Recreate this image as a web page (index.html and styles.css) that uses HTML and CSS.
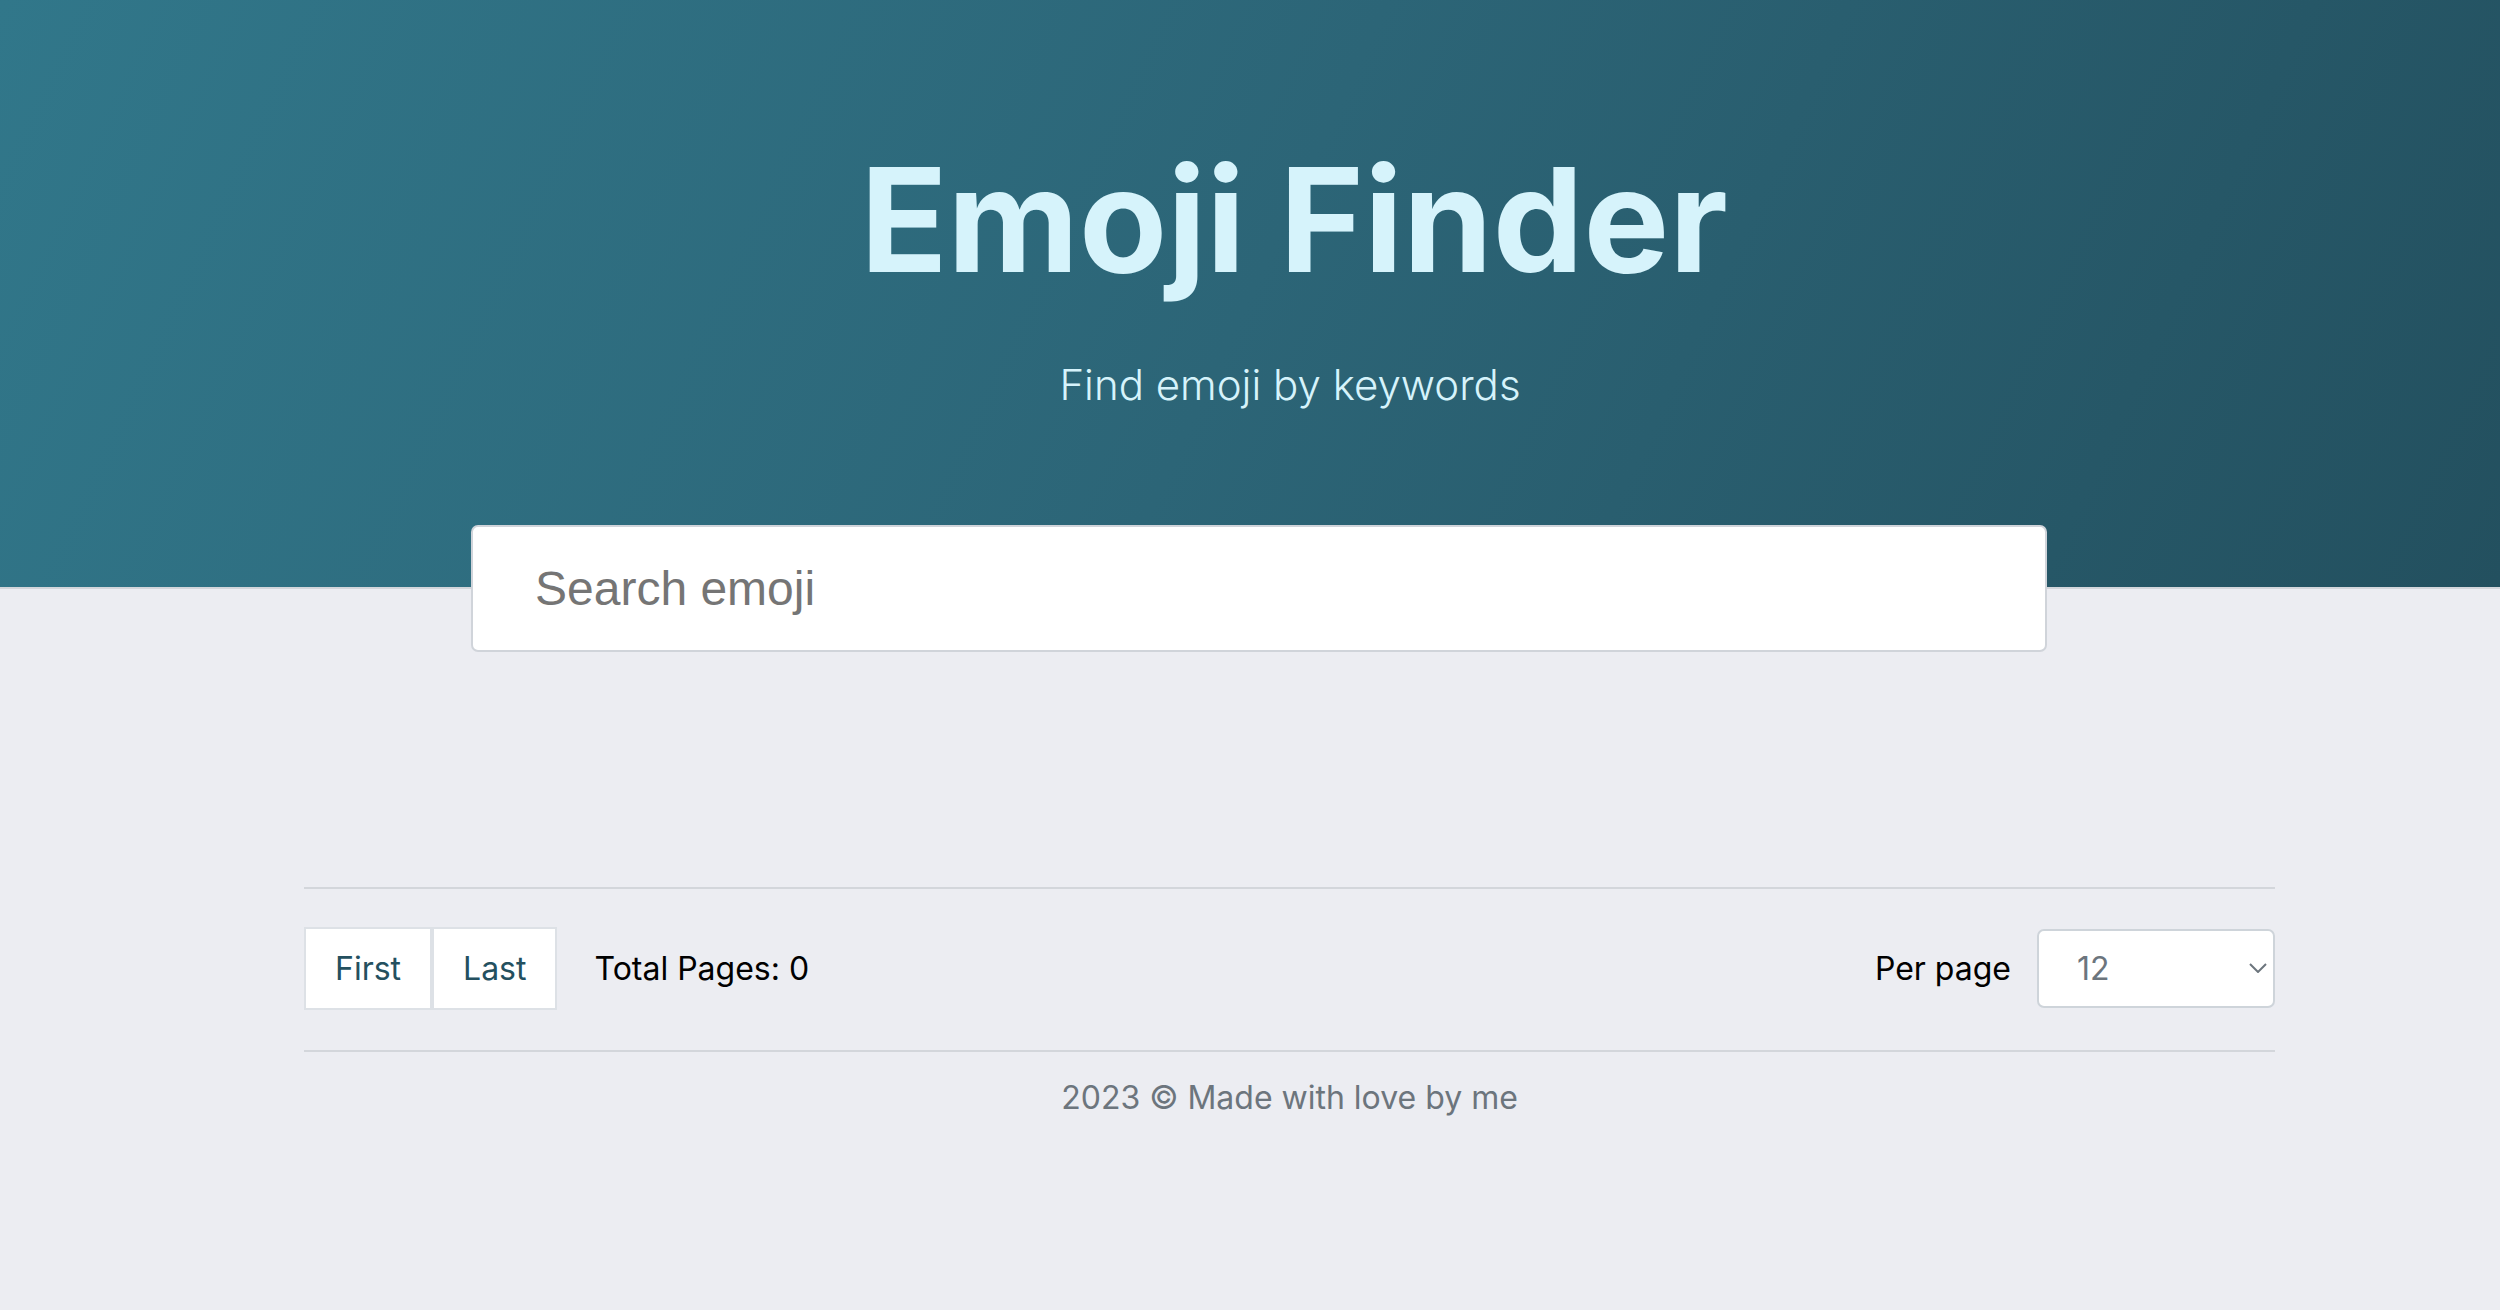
FILE: index.html
```html
<!DOCTYPE html>
<html lang="en">
<head>
<meta charset="utf-8">
<title>Emoji Finder</title>
<link rel="stylesheet" href="styles.css">
</head>
<body>
  <header class="hero">
    <div class="hero-inner">
      <h1 class="hero-title">Emoji Finder</h1>
      <p class="hero-subtitle">Find emoji by keywords</p>
    </div>
  </header>
  <div class="search-wrap">
    <input class="search-input" type="text" placeholder="Search emoji">
  </div>
  <main class="content">
    <div class="pager">
      <div class="pager-left">
        <div class="btn-group">
          <button class="pager-btn" type="button">First</button>
          <button class="pager-btn" type="button">Last</button>
        </div>
        <span class="total">Total Pages: 0</span>
      </div>
      <div class="pager-right">
        <label class="per-label" for="per">Per page</label>
        <div class="select-wrap">
          <select id="per" class="per-select">
            <option>12</option>
            <option>24</option>
            <option>48</option>
          </select>
          <svg class="chev" width="18" height="10" viewBox="0 0 18 10" aria-hidden="true"><path d="M1 1 L9 9 L17 1" fill="none" stroke="#6c757d" stroke-width="2"/></svg>
        </div>
      </div>
    </div>
    <footer class="footer">2023 © Made with love by me</footer>
  </main>
</body>
</html>
```
FILE: styles.css
```css
html, body {
  margin: 0;
  padding: 0;
}
body {
  background: #ecedf2;
  font-family: Inter, "Noto Sans", sans-serif;
  min-height: 1310px;
}
.hero {
  height: 587px;
  background: linear-gradient(115deg, #31778a 0%, #2c6577 50%, #23505f 100%);
  border-bottom: 2px solid #d3d6db;
}
.hero-inner {
  padding: 134px 0 0 80px;
  text-align: center;
}
.hero-title {
  margin: 0;
  padding-left: 8px;
  font-size: 144px;
  font-weight: 700;
  line-height: 172.8px;
  color: #d6f3fb;
}
.hero-subtitle {
  margin: 52px 0 0;
  font-size: 42px;
  font-weight: 300;
  color: #d6f3fb;
}
.search-wrap {
  margin-top: -64px;
  padding-left: 471px;
}
.search-input {
  box-sizing: border-box;
  display: block;
  width: 1576px;
  height: 127px;
  border: 2px solid #d0d4da;
  border-radius: 7px;
  background: #fff;
  padding: 0 62px;
  font-family: "Liberation Sans", Arial, sans-serif;
  font-size: 48px;
  color: #333;
  outline: none;
}
.search-input::placeholder {
  color: #757575;
}
.content {
  width: 1971px;
  margin: 235px 0 0 304px;
}
.pager {
  border-top: 2px solid #d3d6db;
  border-bottom: 2px solid #d3d6db;
  padding: 38px 0 40px;
  display: flex;
  justify-content: space-between;
  align-items: center;
}
.pager-left {
  display: flex;
  align-items: center;
  gap: 37px;
}
.btn-group {
  display: flex;
}
.pager-btn {
  box-sizing: border-box;
  height: 83px;
  padding: 0 29px;
  background: #fff;
  border: 2px solid #dde1e6;
  font-family: Inter, sans-serif;
  font-size: 32px;
  color: #24505f;
  cursor: pointer;
}
.total, .per-label {
  font-size: 32px;
  color: #000;
}
.pager-right {
  display: flex;
  align-items: center;
  gap: 26px;
}
.select-wrap {
  position: relative;
}
.per-select {
  box-sizing: border-box;
  display: block;
  -webkit-appearance: none;
  appearance: none;
  width: 238px;
  height: 79px;
  border: 2px solid #ced4da;
  border-radius: 7px;
  background: #fff;
  padding: 0 38px;
  font-family: Inter, sans-serif;
  font-size: 32px;
  color: #6c757d;
}
.chev {
  position: absolute;
  right: 8px;
  top: 34px;
  pointer-events: none;
}
.footer {
  text-align: center;
  padding-top: 26px;
  font-size: 32px;
  color: #6c757d;
}
```
